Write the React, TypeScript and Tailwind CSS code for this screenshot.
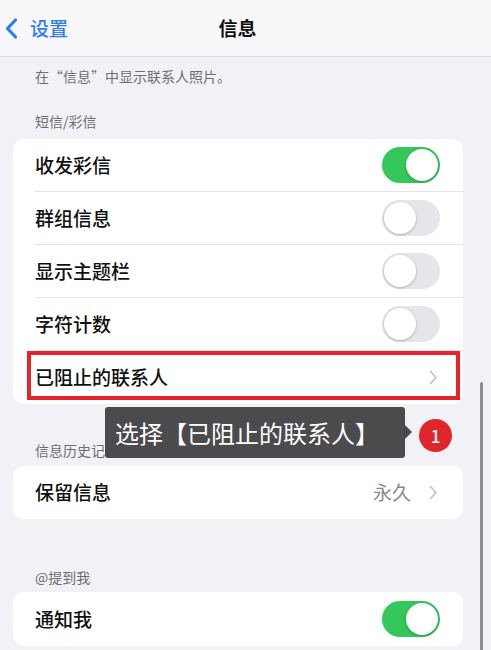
import React from "react";

const font = { fontFamily: '"Noto Sans CJK SC", "Noto Sans", sans-serif' };

function Toggle({ on }: { on: boolean }) {
  return (
    <div
      className={`w-[58px] h-[36px] rounded-full p-[2px] flex items-center ${
        on ? "bg-[#34c759] justify-end" : "bg-[#e6e6ea] justify-start"
      }`}
    >
      <div className="w-[32px] h-[32px] rounded-full bg-white shadow-[0_1px_3px_rgba(0,0,0,0.25)]" />
    </div>
  );
}

function Chevron() {
  return (
    <svg width="9" height="15" viewBox="0 0 9 15" className="shrink-0">
      <path d="M1.5 1.5 L7 7.5 L1.5 13.5" fill="none" stroke="#c3c3c8" strokeWidth="1.8" strokeLinecap="round" strokeLinejoin="round" />
    </svg>
  );
}

function Row({ label, right, last, tall }: { label: string; right: React.ReactNode; last?: boolean; tall?: boolean }) {
  return (
    <div className="pl-[22px]">
      <div
        className={`flex items-center justify-between pr-[23px] ${
          last ? (tall ? "h-[54px]" : "h-[53px]") : "h-[53px] border-b border-[#e4e4e8]"
        }`}
      >
        <span className="text-[19px] font-medium text-[#111]">{label}</span>
        {right}
      </div>
    </div>
  );
}

export default function App() {
  return (
    <div className="relative w-full h-[650px] overflow-hidden bg-[#f2f2f6]" style={font}>
      {/* Nav bar */}
      <div className="h-[57px] grid grid-cols-[1fr_auto_1fr] items-center bg-[#f8f8fa] border-b border-[#dcdce1] pr-[16px]">
        <div className="flex items-center pl-[5px] gap-[12px]">
          <svg width="13" height="21" viewBox="0 0 13 21">
            <path d="M10.5 2 L2.5 10.5 L10.5 19" fill="none" stroke="#2f7cf6" strokeWidth="3.2" strokeLinecap="round" strokeLinejoin="round" />
          </svg>
          <span className="text-[19px] font-medium text-[#2f7cf6]">设置</span>
        </div>
        <div className="text-[19px] font-semibold text-[#111]">信息</div>
        <div />
      </div>

      <div className="pl-[13px] pr-[28px]">
        <p className="pl-[22px] pt-[10px] text-[14px] leading-[18px] text-[#6d6d72]">在“信息”中显示联系人照片。</p>
        <p className="pl-[22px] mt-[27px] text-[14px] leading-[18px] text-[#6d6d72]">短信/彩信</p>

        <div className="mt-[9px] bg-white rounded-[11px]">
          <Row label="收发彩信" right={<Toggle on />} />
          <Row label="群组信息" right={<Toggle on={false} />} />
          <Row label="显示主题栏" right={<Toggle on={false} />} />
          <Row label="字符计数" right={<Toggle on={false} />} />
          <div className="relative">
            <Row label="已阻止的联系人" right={<div className="pr-[2px]"><Chevron /></div>} last />
            <div className="absolute left-[14px] right-[3px] top-0 bottom-[4px] border-[4px] border-[#e5232b]" />
          </div>
        </div>

        <p className="pl-[22px] mt-[38px] text-[14px] leading-[16px] text-[#6d6d72]">信息历史记录</p>
        <div className="mt-[8px] bg-white rounded-[11px]">
          <Row
            label="保留信息"
            right={
              <div className="flex items-center gap-[18px] pr-[2px]">
                <span className="text-[19px] text-[#8a8a8e]">永久</span>
                <Chevron />
              </div>
            }
            last
          />
        </div>

        <p className="pl-[22px] mt-[50px] text-[14px] leading-[16px] text-[#6d6d72]">@提到我</p>
        <div className="mt-[7px] bg-white rounded-[11px]">
          <Row label="通知我" right={<Toggle on />} last tall />
        </div>
      </div>

      {/* Annotation tooltip */}
      <div className="absolute left-[105px] top-[407px] w-[300px] h-[51px] bg-[#4b4b4e] rounded-[3px] flex items-center pl-[10px]">
        <span className="text-[24px] text-white leading-none">选择【已阻止的联系人】</span>
        <div className="absolute right-[-7px] top-[18px] w-0 h-0 border-y-[7px] border-y-transparent border-l-[7px] border-l-[#4b4b4e]" />
      </div>
      <div className="absolute left-[419px] top-[419px] w-[33px] h-[33px] rounded-full bg-[#e0262a] flex items-center justify-center text-white text-[17px] font-medium">
        1
      </div>

      {/* Scroll indicator */}
      <div className="absolute left-[480px] top-[382px] w-[3px] h-[280px] rounded-full bg-[#8d8d92]" />
    </div>
  );
}
